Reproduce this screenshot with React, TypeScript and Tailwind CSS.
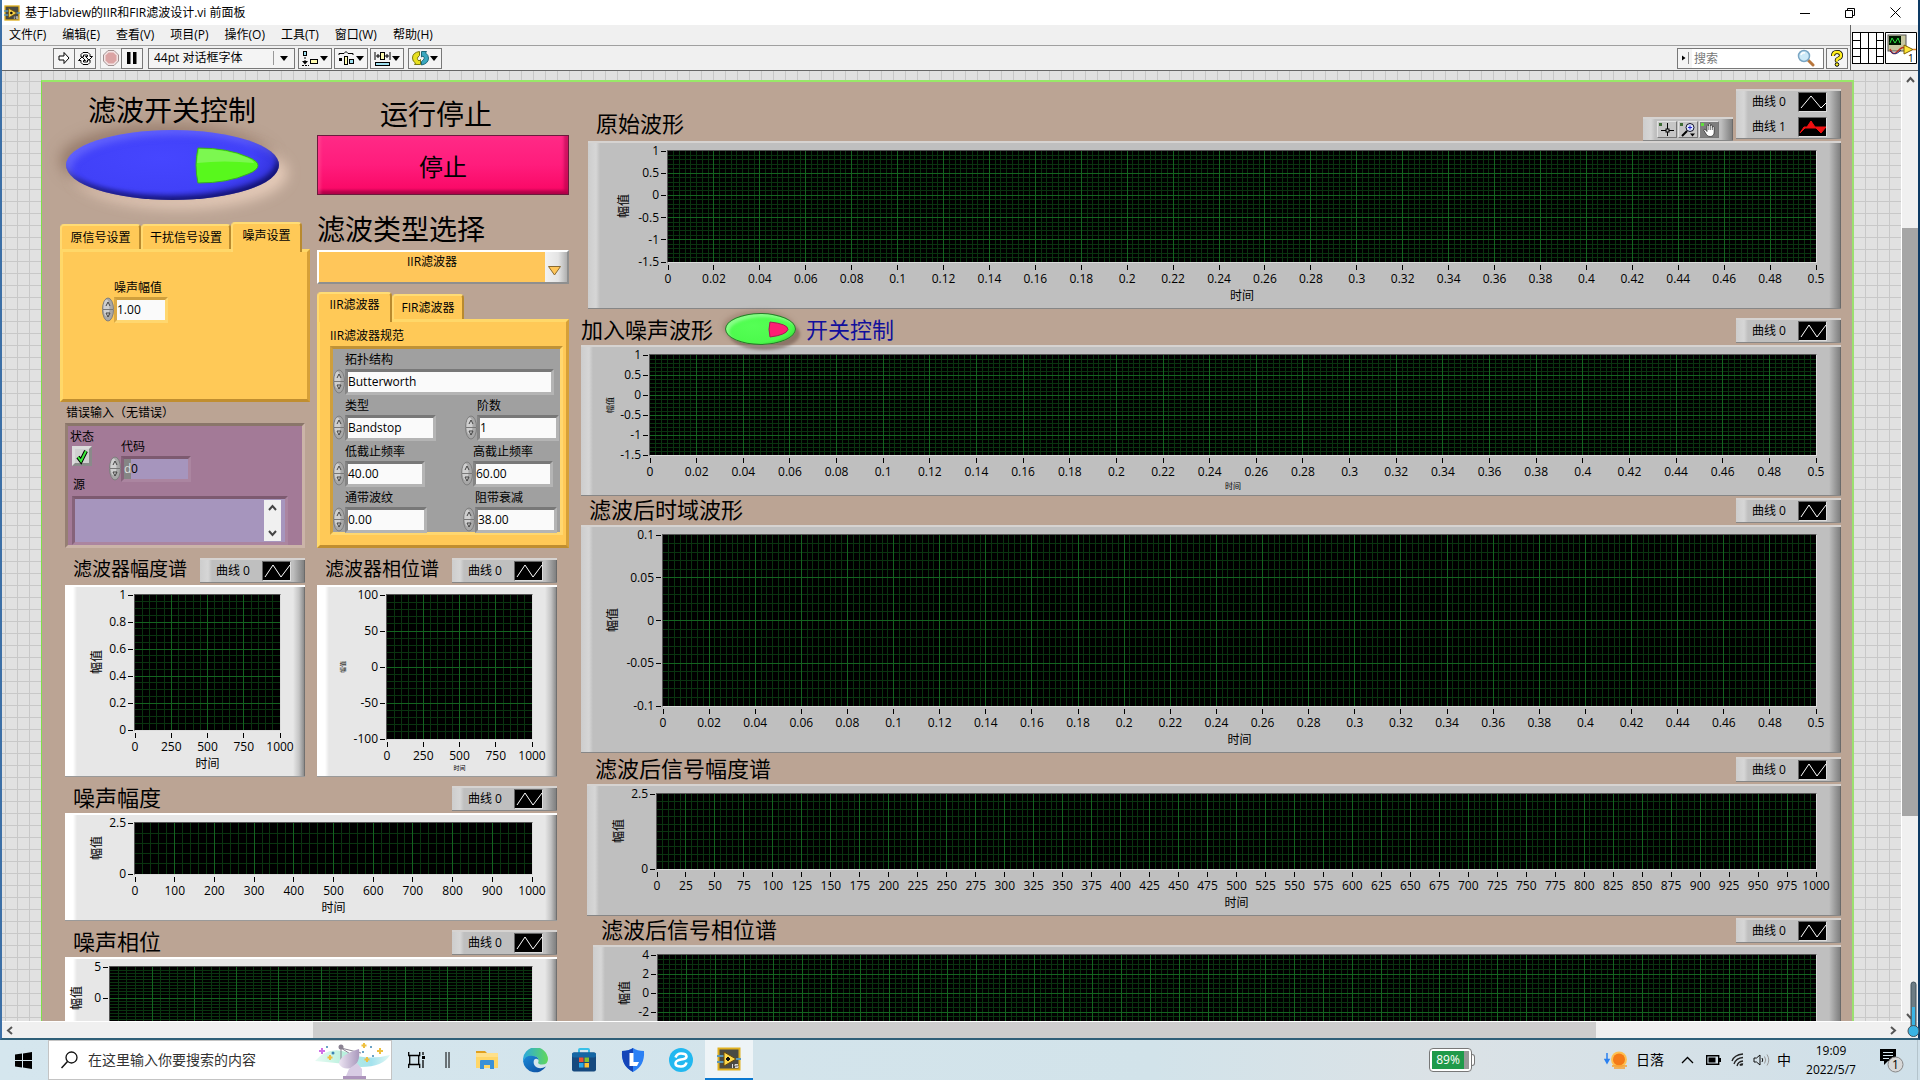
import React from "react";

const FONT = "font-['Open_Sans','Noto_Sans_CJK_SC',sans-serif]";

/* ---------- plots ---------- */

type PlotProps = {
  xs: string[];
  ys: string[];
  minorX: number;
  minorY: number;
  heightClass: string;
  bare?: boolean;
};

function Plot({ xs, ys, minorX, minorY, heightClass, bare }: PlotProps) {
  const nx = (xs.length - 1) * minorX;
  const ny = (ys.length - 1) * minorY;
  const cols = Array.from({ length: nx + 1 }, (_, i) => i);
  const rows = Array.from({ length: ny + 1 }, (_, i) => i);
  const px = (i: number, n: number) => `${(i / n) * 100}%`;
  return (
    <div className={`border border-t-[#555] border-l-[#555] border-r-[#dcdcdc] border-b-[#dcdcdc] bg-black ${heightClass}`}>
      <svg className="block h-full w-full overflow-visible text-xs" role="img" aria-label="plot">
        <g stroke="#0a3410" shapeRendering="crispEdges">
          {cols.filter((i) => i % minorX !== 0).map((i) => (
            <line key={i} x1={px(i, nx)} x2={px(i, nx)} y1="0" y2="100%" />
          ))}
          {rows.filter((i) => i % minorY !== 0).map((i) => (
            <line key={i} y1={px(i, ny)} y2={px(i, ny)} x1="0" x2="100%" />
          ))}
        </g>
        <g stroke="#146420" shapeRendering="crispEdges">
          {xs.slice(1, -1).map((t, i) => (
            <line key={t} x1={px(i + 1, xs.length - 1)} x2={px(i + 1, xs.length - 1)} y1="0" y2="100%" />
          ))}
          {ys.slice(1, -1).map((t, i) => (
            <line key={t} y1={px(i + 1, ys.length - 1)} y2={px(i + 1, ys.length - 1)} x1="0" x2="100%" />
          ))}
        </g>
        {!bare && xs.map((t, i) => (
          <svg key={t} x={px(i, xs.length - 1)} y="100%" className="overflow-visible">
            <path d="M0 3v5" stroke="#000" shapeRendering="crispEdges" />
            <text y="21" textAnchor="middle">{t}</text>
          </svg>
        ))}
        {ys.map((t, i) => t && (
          <svg key={t} y={px(i, ys.length - 1)} x="0" className="overflow-visible">
            <path d="M-7 0h5" stroke="#000" shapeRendering="crispEdges" />
            <text x="-9" y="4" textAnchor="end">{t}</text>
          </svg>
        ))}
      </svg>
    </div>
  );
}

const GRAY_BEVEL =
  "border-t-2 border-t-[#d6d3d1] border-b border-b-[#868686] bg-[linear-gradient(90deg,#cdcdcd_0,#d6d6d6_8px,#bfbfbf_12px,#bfbfbf_calc(100%-12px),#9c9c9c_calc(100%-6px),#808080_calc(100%-1px),#555_100%)]";
const WHITE_BEVEL =
  "border-t-2 border-t-white border-b border-b-[#9a9a9a] bg-[linear-gradient(90deg,#fff_0,#fff_8px,#e7e7e7_12px,#e7e7e7_calc(100%-12px),#c4c4c4_calc(100%-6px),#8c8c8c_calc(100%-1px),#555_100%)]";

type GraphProps = PlotProps & {
  light?: boolean;
  axisClass: string;
  yTitleClass?: string;
  small?: "md" | "xs";
};

function Graph({ light, axisClass, yTitleClass = "text-xs", small, ...plot }: GraphProps) {
  const footer = small === "md" ? "mt-6 h-3 leading-3 text-[8px]" : small === "xs" ? "mt-6 h-[9px] leading-[9px] text-[6px]" : "mt-6 h-[18px] leading-[18px] text-xs";
  return (
    <div className={`flex pt-[7px] pb-[3px] pr-6 ${light ? WHITE_BEVEL : GRAY_BEVEL}`}>
      <div className={`shrink-0 flex items-start justify-start ${axisClass}`}>
        <div className={`flex items-center justify-center ${plot.heightClass}`}>
          <span className={`rotate-180 leading-4 [writing-mode:vertical-rl] [text-orientation:sideways] ${yTitleClass}`}>幅值</span>
        </div>
      </div>
      <div className="min-w-0 flex-1">
        <Plot {...plot} />
        <div className={`text-center ${footer}`}>{!plot.bare && "时间"}</div>
      </div>
    </div>
  );
}

function Swatch({ kind }: { kind: "line" | "wide" | "fill" }) {
  return (
    <svg width="29" height="20" className="border border-[#666] border-b-[#ddd] border-r-[#ddd] bg-black">
      {kind === "line" && <path d="M2 15L10 3L18 15L27 3" fill="none" stroke="#fff" />}
      {kind === "wide" && <path d="M2 15L12 3L22 15L27 10" fill="none" stroke="#fff" />}
      {kind === "fill" && <path d="M1 15L5 9L8 9L12 3L16 9L27 9L22 15L17 10L6 10Z" fill="#f01010" stroke="#f01010" />}
    </svg>
  );
}

function Legend({ double }: { double?: boolean }) {
  const row = (name: string, kind: "line" | "wide" | "fill") => (
    <div className="flex h-[21px] items-center justify-between">
      <span className="leading-4">{name}</span>
      <Swatch kind={kind} />
    </div>
  );
  return (
    <div className={`mb-0.5 flex w-[105px] shrink-0 flex-col gap-1 pb-px pl-4 pr-3.5 text-xs ${GRAY_BEVEL}`}>
      {row("曲线 0", double ? "wide" : "line")}
      {double && row("曲线 1", "fill")}
    </div>
  );
}

function Palette() {
  const cell = "flex h-[17px] w-5 items-center justify-center border border-[#e2e2e2] border-b-[#777] border-r-[#777]";
  return (
    <div className={`mr-[3px] flex h-6 shrink-0 items-center gap-px pl-3.5 pr-3 w-[90px] ${GRAY_BEVEL}`}>
      <button aria-label="光标" className={`${cell} bg-[#c6c6c6]`}>
        <svg width="18" height="15"><rect x="1" y="1" width="3" height="3" fill="#3d6b35" /><path d="M9.500 1v13M3 8.500h13" stroke="#000" /><rect x="8" y="7" width="3" height="3" fill="#c6c6c6" stroke="#000" /></svg>
      </button>
      <button aria-label="缩放" className={`${cell} bg-[#c6c6c6]`}>
        <svg width="18" height="15"><rect x="1" y="1" width="3" height="3" fill="#3d6b35" /><circle cx="11" cy="5.500" r="4" fill="#dde6ff" stroke="#112" /><path d="M9 5.500h4M11 3.500v4" stroke="#22c" /><path d="M8 9L3 14" stroke="#000" strokeWidth="2" /><path d="M11 11.500h5l-2.500 3z" /></svg>
      </button>
      <button aria-label="平移" className={`${cell} bg-[#7e7e7e]`}>
        <svg width="18" height="15"><rect x="1" y="1" width="3" height="3" fill="#5fe03c" /><path d="M3.500 8c1-1.500 2.500 0 3.500 1.500V4c0-1.300 1.800-1.300 1.800 0V2.500c0-1.300 1.800-1.300 1.800 0V4c0-1.300 1.800-1.300 1.800 0v1.500c0-1.300 1.800-1.300 1.800 0V10c0 3-1.500 4.500-4 4.500s-3.700-1.500-5-4z" fill="#fff" stroke="#222" strokeWidth=".7" /><path d="M8.800 4v4M10.600 4v4M12.400 5.500V8" stroke="#222" strokeWidth=".6" /></svg>
      </button>
    </div>
  );
}

function Header({ title, size = "text-[22px]", h, double, children }: { title: string; size?: string; h: string; double?: boolean; children?: React.ReactNode }) {
  return (
    <div className={`flex items-end ${h}`}>
      <h2 className={`shrink-0 whitespace-nowrap leading-7 ${double ? "mb-1" : "mb-0.5"} ${size}`}>{title}</h2>
      {children}
      <div className="ml-auto flex items-end">
        {double && <Palette />}
        <Legend double={double} />
      </div>
    </div>
  );
}

/* ---------- controls ---------- */

function Spinner() {
  return (
    <svg width="12" height="26" viewBox="0 0 12 26" className="shrink-0">
      <ellipse cx="6" cy="12.500" rx="5.500" ry="11.500" fill="#a8a8a8" stroke="#7e7e7e" />
      <ellipse cx="4.500" cy="11" rx="3" ry="8.500" fill="#cfcfcf" />
      <path d="M1 12.500h10" stroke="#777" />
      <path d="M4 9L6 5L8 9M4 16h4L6 20z" fill="none" stroke="#444" />
    </svg>
  );
}

type FieldProps = { id: string; label: string; value: string; width: string; tone?: "gray" | "gold" | "purple" };

function Field({ id, label, value, width, tone = "gray" }: FieldProps) {
  const frame =
    tone === "gold"
      ? "border-t-[#cf9f3c] border-l-[#dba944] border-r-[#ffd76f] border-b-[#ffd76f] bg-[#fafafa]"
      : tone === "purple"
        ? "border-t-[#7d5a70] border-l-[#86637a] border-r-[#ab85a0] border-b-[#ab85a0] bg-[#a695bd]"
        : "border-t-[#787878] border-l-[#858585] border-r-[#b4b4b4] border-b-[#b4b4b4] bg-[#fafafa]";
  return (
    <div className="shrink-0">
      <label htmlFor={id} className="block h-[18px] pl-3 leading-[18px]">{label}</label>
      <div className="flex">
        <Spinner />
        <div className={`flex h-[26px] border-[3px] ${frame} ${width}`}>
          {tone === "purple" && <span className="w-[7px] bg-[#858585] leading-5 text-[#ddd]">d</span>}
          <input id={id} defaultValue={value} className="h-5 w-full min-w-0 bg-transparent leading-5 outline-none" />
        </div>
      </div>
    </div>
  );
}

const TAB = "rounded-t border-t-2 border-l-2 border-r-2 border-t-[#ffdc74] border-l-[#ffd971] border-r-[#b98a2e] bg-[#ffc957] whitespace-nowrap text-center";
const TAB_BODY = "border-t-[3px] border-l-[3px] border-r-[3px] border-b-[3px] border-t-[#ffd869] border-l-[#ffd869] border-r-[#d6a038] border-b-[#c08e30] bg-[#ffc957]";

function LeftColumn() {
  return (
    <div className="w-[509px] shrink-0">
      <div className="flex justify-between">
        <div className="w-[250px]">
          <h2 className="mt-2 whitespace-nowrap pl-7 text-[28px] leading-10">滤波开关控制</h2>
          <button
            aria-label="滤波开关控制"
            className="ml-1.5 flex h-[70px] w-[213px] items-center justify-end rounded-[50%] bg-[radial-gradient(ellipse_at_45%_40%,#4646ff_0%,#4141f8_55%,#2a2ac8_80%,#101070_100%)] pr-5 shadow-[inset_5px_5px_7px_#8080ff80,inset_-3px_-4px_5px_#00003090,-6px_-5px_14px_#7a5c4c90,8px_8px_14px_#ffe4d0b0]"
          >
            <svg width="65" height="37" viewBox="0 0 65 37">
              <path d="M4 1Q34 1 54 10Q64 14 64 18.500Q64 23 54 27Q34 36 4 36Q0 18 4 1Z" fill="#58f81c" stroke="#3aae20" />
              <path d="M5 2Q34 2 54 11Q60 14 60 16Q30 13 3 16Z" fill="#7cf850" />
            </svg>
          </button>
          <div className="mt-[22px] flex h-[27px] items-end" role="tablist">
            <button role="tab" className={`h-[25px] w-[81px] leading-[22px] ${TAB}`}>原信号设置</button>
            <button role="tab" className={`h-[25px] w-[90px] leading-[22px] ${TAB}`}>干扰信号设置</button>
            <button role="tab" aria-selected="true" className={`z-10 -mb-[3px] h-[30px] w-[71px] pb-1 leading-[22px] ${TAB}`}>噪声设置</button>
          </div>
          <div className={`h-[153px] pl-[39px] pt-[27px] ${TAB_BODY}`}>
            <Field id="noise" label="噪声幅值" value="1.00" width="w-[54px]" tone="gold" />
          </div>
          <div className="h-[21px] pl-1.5 leading-[21px]">错误输入（无错误）</div>
          <div className="ml-[5px] h-[125px] w-60 border-[3px] border-b-[#cbb4a8] border-l-[#957f73] border-r-[#cbb4a8] border-t-[#8a766a] bg-[#a37a97] pl-0.5">
            <div className="flex h-[50px] items-start">
              <div className="w-[39px] pt-0.5">
                <label htmlFor="status" className="block h-[18px] leading-[18px]">状态</label>
                <div className="relative ml-0.5 h-5 w-5">
                  <input id="status" type="checkbox" defaultChecked className="block h-5 w-5 appearance-none border-[3px] border-b-[#8a8a8a] border-l-[#dcdcdc] border-r-[#8a8a8a] border-t-[#dcdcdc] bg-[#d0d0d0]" />
                  <svg className="pointer-events-none absolute inset-0" width="20" height="20"><path d="M6 11l3 4l5-10" fill="none" stroke="#000" strokeWidth="4" /><path d="M6 11l3 4l5-10" fill="none" stroke="#3bea3b" strokeWidth="2" /></svg>
                </div>
              </div>
              <div className="pt-3">
                <Field id="code" label="代码" value="0" width="w-[70px]" tone="purple" />
              </div>
            </div>
            <label htmlFor="source" className="block h-5 pl-[3px] leading-[18px]">源</label>
            <div className="ml-0.5 flex h-[49px] w-[216px] border-[3px] border-b-[#ab85a0] border-l-[#86637a] border-r-[#ab85a0] border-t-[#7d5a70] bg-[#a695bd] pr-1">
              <textarea id="source" className="min-w-0 flex-1 resize-none bg-transparent outline-none" />
              <div className="my-px flex w-[17px] flex-col items-center justify-between bg-[#f0f0f0] py-1">
                <svg width="9" height="7"><path d="M1 6L4.500 2L8 6" fill="none" stroke="#444" strokeWidth="2" /></svg>
                <svg width="9" height="7"><path d="M1 1L4.500 5L8 1" fill="none" stroke="#444" strokeWidth="2" /></svg>
              </div>
            </div>
          </div>
        </div>

        <div className="w-[252px]">
          <h2 className="mt-3 whitespace-nowrap pl-[63px] text-[28px] leading-10">运行停止</h2>
          <button className="mt-px block h-[60px] w-full border border-[#6b1a3c] bg-[linear-gradient(#ff2a86_0,#ff1c7c_50%,#fa0a68_90%,#b8004c_100%)] pt-1 text-2xl shadow-[inset_5px_0_3px_-2px_#ff5a9a60,inset_-4px_-3px_3px_#a0004080]">停止</button>
          <h2 className="mt-3.5 whitespace-nowrap text-[28px] leading-10">滤波类型选择</h2>
          <div className="mt-px flex h-[34px] border-2 border-b-[#8f8f8f] border-l-white border-r-[#8f8f8f] border-t-white bg-[#ffc65a]">
            <select aria-label="滤波类型选择" className="min-w-0 flex-1 appearance-none pb-2.5 text-center outline-none [text-align-last:center]">
              <option>IIR滤波器</option>
            </select>
            <div className="flex w-[22px] items-center justify-center bg-[linear-gradient(90deg,#f2f2f2,#e4e4e4_60%,#b0b0b0)] pr-1 pt-2">
              <svg width="13" height="10"><path d="M.5 .5h12L6.500 9z" fill="#ffc65a" stroke="#8a6a30" /></svg>
            </div>
          </div>
          <div className="mt-2 flex h-[27px] items-end" role="tablist">
            <button role="tab" aria-selected="true" className={`z-10 -mb-[3px] h-[30px] w-[75px] pb-1.5 leading-[22px] ${TAB}`}>IIR滤波器</button>
            <button role="tab" className={`h-[25px] w-[72px] leading-[22px] ${TAB}`}>FIR滤波器</button>
          </div>
          <div className={`h-[229px] pl-2.5 pr-[3px] pt-1 ${TAB_BODY}`}>
            <div className="h-5 leading-5">IIR滤波器规范</div>
            <div className="h-[189px] border-[3px] border-b-[#ffd76f] border-l-[#cf9f3c] border-r-[#ffd76f] border-t-[#c09236] bg-[#a0a0a0] pt-0.5">
              <Field id="topology" label="拓扑结构" value="Butterworth" width="w-[209px]" />
              <div className="mt-0.5 flex gap-[29px]">
                <Field id="kind" label="类型" value="Bandstop" width="w-[91px]" />
                <Field id="order" label="阶数" value="1" width="w-[82px]" />
              </div>
              <div className="mt-0.5 flex gap-9">
                <Field id="low" label="低截止频率" value="40.00" width="w-20" />
                <Field id="high" label="高截止频率" value="60.00" width="w-20" />
              </div>
              <div className="mt-0.5 flex gap-9">
                <Field id="ripple" label="通带波纹" value="0.00" width="w-[82px]" />
                <Field id="atten" label="阻带衰减" value="38.00" width="w-[82px]" />
              </div>
            </div>
          </div>
        </div>
      </div>

      <div className="ml-[5px] mr-3">
        <div className="flex gap-3">
          <section className="w-60">
            <div className="pl-2"><Header title="滤波器幅度谱" size="text-[19px]" h="h-[37px]" /></div>
            <Graph light axisClass="w-[69px] pl-6" heightClass="h-[137px]" xs={["0", "250", "500", "750", "1000"]} ys={["1", "0.8", "0.6", "0.4", "0.2", "0"]} minorX={5} minorY={4} />
          </section>
          <section className="w-60">
            <div className="pl-2"><Header title="滤波器相位谱" size="text-[19px]" h="h-[37px]" /></div>
            <Graph light small="xs" yTitleClass="text-[6px]" axisClass="w-[69px] pl-[18px]" heightClass="h-[146px]" xs={["0", "250", "500", "750", "1000"]} ys={["100", "50", "0", "-50", "-100"]} minorX={5} minorY={5} />
          </section>
        </div>
        <section>
          <div className="pl-2"><Header title="噪声幅度" h="h-9" /></div>
          <Graph light axisClass="w-[69px] pl-6" heightClass="h-[53px]" xs={["0", "100", "200", "300", "400", "500", "600", "700", "800", "900", "1000"]} ys={["2.5", "0"]} minorX={5} minorY={5} />
        </section>
        <section>
          <div className="pl-2"><Header title="噪声相位" h="h-9" /></div>
          <Graph light bare axisClass="w-11 pl-1" heightClass="h-16" xs={["0", "100", "200", "300", "400", "500", "600", "700", "800", "900", "1000"]} ys={["5", "0", ""]} minorX={5} minorY={10} />
        </section>
      </div>
    </div>
  );
}

const TIME = Array.from({ length: 26 }, (_, i) => String(Math.round(i * 2) / 100));
const FREQ = Array.from({ length: 41 }, (_, i) => String(i * 25));
const AMP = ["1", "0.5", "0", "-0.5", "-1", "-1.5"];

function RightColumn() {
  return (
    <div className="min-w-0 flex-1">
      <section className="ml-[7px]">
        <div className="pl-2"><Header title="原始波形" h="h-[59px]" double /></div>
        <Graph axisClass="w-[79px] pl-7" heightClass="h-[113px]" xs={TIME} ys={AMP} minorX={8} minorY={5} />
      </section>
      <section>
        <Header title="加入噪声波形" h="h-9">
          <button
            aria-label="开关控制"
            className="ml-3 mr-2.5 flex h-8 w-[71px] shrink-0 items-center justify-end rounded-[50%] border border-[#2b7a2b] bg-[radial-gradient(ellipse_at_40%_40%,#55ff55_0%,#4cfa4c_65%,#20b020_100%)] pr-1.5 shadow-[-2px_-2px_5px_#8a6c5c80,4px_5px_3px_#6a544890,inset_3px_3px_3px_#c0ffc080]"
          >
            <svg width="21" height="17"><path d="M2 1Q20 3 20 8.500Q18 14 2 16Q0 8 2 1Z" fill="#ff1c74" stroke="#a02050" /></svg>
          </button>
          <span className="mb-0.5 whitespace-nowrap text-[22px] leading-7 text-[#10109c]">开关控制</span>
        </Header>
        <Graph small="md" yTitleClass="text-[8px]" axisClass="w-[68px] pl-[21px]" heightClass="h-[102px]" xs={TIME} ys={AMP} minorX={8} minorY={5} />
      </section>
      <section>
        <div className="pl-2"><Header title="滤波后时域波形" h="h-[29px]" /></div>
        <Graph axisClass="w-[81px] pl-6" heightClass="h-[173px]" xs={TIME} ys={["0.1", "0.05", "0", "-0.05", "-0.1"]} minorX={8} minorY={5} />
      </section>
      <section className="ml-1.5">
        <div className="pl-2"><Header title="滤波后信号幅度谱" h="h-[31px]" /></div>
        <Graph axisClass="w-[69px] pl-6" heightClass="h-[77px]" xs={FREQ} ys={["2.5", "0"]} minorX={5} minorY={10} />
      </section>
      <section className="ml-3">
        <div className="pl-2"><Header title="滤波后信号相位谱" h="h-[29px]" /></div>
        <Graph bare axisClass="w-16 pl-6" heightClass="h-[78px]" xs={FREQ} ys={["4", "2", "0", "-2", ""]} minorX={5} minorY={4} />
      </section>
    </div>
  );
}

/* ---------- window chrome ---------- */

function LabviewIcon({ size }: { size: number }) {
  return (
    <svg width={size} height={size} viewBox="0 0 24 24" className="shrink-0">
      <rect x="1.500" y="1.500" width="21" height="21" fill="#4a4a44" stroke="#e0b020" strokeWidth="2" />
      <path d="M0 9h7M0 15h7M17 12h7" stroke="#5a96b8" strokeWidth="2" />
      <path d="M7 5L19 12L7 19Z" fill="#ffd84a" stroke="#6a4a08" />
      <path d="M9 12h4M11 10v4" stroke="#111" strokeWidth="2" />
      <path d="M15.500 17v4M21 17.500h-3v1.500h3v1.500h-3" stroke="#ddd" fill="none" />
    </svg>
  );
}

const Caret = () => (
  <svg width="8" height="5"><path d="M0 0h8L4 5z" /></svg>
);

const TB = "flex h-[21px] items-center justify-center border border-[#787878] bg-[#f4f4f4]";

function Toolbar() {
  return (
    <div className="flex h-[25px] items-center border-t border-[#a0a0a0] bg-[#f0f0f0] pl-[51px] pr-0.5">
      <button aria-label="运行" className={`w-[22px] ${TB}`}>
        <svg width="14" height="14"><path d="M2 5h5V1.500L12 7L7 12.500V9H2z" fill="#fff" stroke="#000" /></svg>
      </button>
      <button aria-label="连续运行" className={`-ml-px w-[22px] ${TB}`}>
        <svg width="17" height="15" fill="none" stroke="#000"><path d="M4 6V3.500L6 1.500h5l2 2v2h2.500L12 9L8.500 5.500h2V4h-4v2z" fill="#fff" /><path d="M13 9v2.500L11 13.500H6l-2-2V9.500H1.500L5 6L8.500 9.500h-2V11h4V9z" fill="#fff" /></svg>
      </button>
      <button aria-label="中止" className={`ml-1 w-[22px] ${TB} border-[#c0c0c0]`}>
        <svg width="16" height="16"><path d="M5 .5h6L15.500 5v6L11 15.500H5L.5 11V5z" fill="#f4e4e4" stroke="#a09090" /><path d="M5.500 2.500h5l3 3v5l-3 3h-5l-3-3v-5z" fill="#dba4a4" /></svg>
      </button>
      <button aria-label="暂停" className={`-ml-px w-[22px] ${TB}`}>
        <svg width="10" height="12"><path d="M0 0h3.500v12H0zM6 0h3.500v12H6z" /></svg>
      </button>
      <div className={`relative ml-[5px] w-[147px] ${TB}`}>
        <select aria-label="字体" className="h-full w-full appearance-none pl-[5px] outline-none"><option>44pt 对话框字体</option></select>
        <span className="pointer-events-none absolute right-1.5 flex items-center gap-1.5">
          <i className="h-3.5 w-px bg-[#999]" />
          <Caret />
        </span>
      </div>
      <button aria-label="对齐对象" className={`ml-[3px] w-[34px] gap-px ${TB}`}>
        <svg width="17" height="15"><rect x="1.500" y=".5" width="3" height="4" fill="#9fe0f0" stroke="#000" /><path d="M3 6v5" stroke="#000" strokeDasharray="2 1" /><path d="M0 10h6L3 13.500z" /><path d="M0 14.500h7" stroke="#000" strokeDasharray="2 1" /><rect x="8.500" y="8.500" width="7" height="4" fill="#fffbb0" stroke="#000" /></svg>
        <Caret />
      </button>
      <button aria-label="分布对象" className={`ml-0.5 w-[34px] gap-px ${TB}`}>
        <svg width="17" height="15"><path d="M1 4V2.500h5L8 .5l2 2h5V4" fill="none" stroke="#000" /><rect x="1" y="7" width="3" height="3" /><rect x="6.500" y="5.500" width="3" height="8" fill="#fffbb0" stroke="#000" /><rect x="11.500" y="8.500" width="4" height="4" fill="#9fe0f0" stroke="#000" /></svg>
        <Caret />
      </button>
      <button aria-label="调整大小" className={`ml-0.5 w-[34px] gap-px ${TB}`}>
        <svg width="17" height="15"><path d="M1 1v8M16 1v8M2 5h4M11 5h4M4 3v4M13 3v4" stroke="#000" /><rect x="6.500" y="1.500" width="4" height="7" fill="#fffbb0" stroke="#000" /><rect x="1.500" y="11.500" width="14" height="3" fill="#9fe0f0" stroke="#000" /></svg>
        <Caret />
      </button>
      <button aria-label="重新排序" className={`ml-1 w-[34px] gap-px ${TB}`}>
        <svg width="17" height="15"><path d="M7.500 .5Q.5 1.500 .5 7q0 3.500 3 5l-1 1.500h6V8.500L7 10Q3.500 7.500 7.500 4.500Z" fill="#e8e020" stroke="#7a7810" /><path d="M9.500 .5v5.500l1.500-1q3 2.500-1.500 5.500V14Q16.500 12.500 16.500 7q0-3-3-5l1-1.500z" fill="#3aa8c0" stroke="#1c6878" /></svg>
        <Caret />
      </button>
      <div className={`ml-auto w-[147px] ${TB} bg-white`}>
        <span className="flex h-full w-3.5 items-center justify-center bg-[#f4f4f4]"><svg width="9" height="12"><path d="M1 3.500v5l3.500-2.500z" /><path d="M7.500 0v12" stroke="#888" /></svg></span>
        <input aria-label="搜索" placeholder="搜索" className="h-full min-w-0 flex-1 pl-0.5 outline-none placeholder:text-[#777]" />
        <svg width="18" height="18" className="mr-2"><path d="M11 11l5 5" stroke="#b8763c" strokeWidth="3" strokeLinecap="round" /><circle cx="7" cy="7" r="5.500" fill="#cdeaf8" stroke="#7aa6c4" strokeWidth="1.500" /><path d="M4 6q1-3 4-2" stroke="#fff" fill="none" strokeWidth="1.500" /></svg>
      </div>
      <button aria-label="帮助" className={`ml-0.5 w-[22px] ${TB}`}>
        <svg width="14" height="17" fill="none"><path d="M3 6q0-4 4-4t4 3.500q0 2-2.500 3T7 11.500" stroke="#000" strokeWidth="4" /><path d="M3 6q0-4 4-4t4 3.500q0 2-2.500 3T7 11.500" stroke="#ffee20" strokeWidth="2.500" /><circle cx="7" cy="14.500" r="1.800" fill="#ffee20" stroke="#000" /></svg>
      </button>
    </div>
  );
}

const MENUS = ["文件(F)", "编辑(E)", "查看(V)", "项目(P)", "操作(O)", "工具(T)", "窗口(W)", "帮助(H)"];

function Taskbar() {
  return (
    <footer className="flex h-10 shrink-0 items-center bg-[linear-gradient(90deg,#d5e6ee,#d2e3ea_60%,#dbe2e6_75%,#cfe0e9)]">
      <button aria-label="开始" className="flex h-full w-12 items-center justify-center pr-0.5">
        <svg width="17" height="17"><path d="M0 2.500L7 1.500V8H0zM8 1.400L17 0V8H8zM0 9h7v6.500L0 14.500zM8 9h9v8L8 15.600z" /></svg>
      </button>
      <div className="relative flex h-full w-[344px] items-center border border-[#c4c4c4] bg-white pl-3">
        <svg width="17" height="18"><circle cx="10.500" cy="6.500" r="5.500" fill="none" stroke="#111" strokeWidth="1.300" /><path d="M6.500 10.500L.5 17" stroke="#111" strokeWidth="1.500" /></svg>
        <input aria-label="搜索" placeholder="在这里输入你要搜索的内容" className="min-w-0 flex-1 pl-2.5 text-sm outline-none placeholder:text-[#333]" />
        <svg width="76" height="38" viewBox="0 0 76 38">
          <defs>
            <linearGradient id="aurora" x1="0" x2="1"><stop offset="0" stopColor="#e8fbf4" /><stop offset=".4" stopColor="#b8f0dc" /><stop offset=".75" stopColor="#a4e2ee" /><stop offset="1" stopColor="#e0f8f4" /></linearGradient>
            <linearGradient id="dish" x1="0" x2="1"><stop offset="0" stopColor="#ece4f2" /><stop offset="1" stopColor="#a998bc" /></linearGradient>
          </defs>
          <path d="M0 20Q14 4 34 12Q52 20 75 14Q68 26 46 26Q28 22 0 20Z" fill="url(#aurora)" />
          <path d="M26 7L46 12M26 7L40 16M26 7V19" stroke="#8a8292" />
          <path d="M24 23Q24 14 44 8Q46 22 36 27Q28 29 24 23Z" fill="url(#dish)" />
          <circle cx="26" cy="6" r="2.500" fill="#8a8292" />
          <path d="M34 28l8-6l5 6v7H31z" fill="#d8cce4" /><path d="M28 35h23v3H28z" fill="#ad94bc" />
          <path d="M7 7v6M4 10h6" stroke="#d070e8" strokeWidth="2" />
          <path d="M49 2v5M46.500 4.500h5M65 7v6M62 10h6M52 16v5M49.500 18.500h5M15 14v5M12.500 16.500h5" stroke="#eec040" strokeWidth="2" />
          <g fill="#3a84b4"><circle cx="18" cy="12" r="1.500" /><circle cx="48" cy="11" r="1" /><circle cx="58" cy="15" r="1" /><circle cx="12" cy="6" r="1" /><circle cx="56" cy="6" r="1" /></g>
        </svg>
      </div>
      <svg className="ml-4" width="17" height="16" fill="none" stroke="#000" strokeWidth="1.300"><path d="M.7 0v3.500h11V0M.7 16v-3.500h11V16M1.700 3.500v9M10.700 3.500v9M15 0v3M15 8v8" /><path d="M14 4h3v3h-3z" fill="#000" stroke="none" /></svg>
      <svg className="ml-5" width="5" height="16"><path d="M1 0v16M4 0v16" stroke="#000" /></svg>
      <svg className="ml-[25px]" width="23" height="20"><path d="M1 1h9l2 2H1z" fill="#e0a020" /><path d="M1 3h22v15H1z" fill="#ffd668" /><path d="M1 3h22v4H1z" fill="#ffe08a" /><path d="M5 19v-8q0-1 1-1h12q1 0 1 1v8h-4v-4H9v4z" fill="#3a90d8" /></svg>
      <svg className="ml-[25px]" width="25" height="25" viewBox="0 0 25 25">
        <defs>
          <linearGradient id="edgeTop" x1="0" x2="1"><stop offset="0" stopColor="#2aa8e0" /><stop offset="1" stopColor="#62d85a" /></linearGradient>
          <linearGradient id="edgeBlue" x1="0" y1="0" x2="1" y2="1"><stop offset="0" stopColor="#1a8ad8" /><stop offset="1" stopColor="#0c4a9c" /></linearGradient>
        </defs>
        <path d="M0 12.500A12.500 12.500 0 0 1 25 11q0 5.500-6 5.500q-5 0-3.500-3Q16 8 10 8Q3 8 0 13z" fill="url(#edgeTop)" />
        <path d="M0 13Q3 7 10 8Q15 8 15.500 12Q13 9.500 11 12Q9.500 17 14 19.500Q18 21.500 23 18.500A12.500 12.500 0 0 1 0 13Z" fill="url(#edgeBlue)" />
      </svg>
      <svg className="ml-6" width="24" height="24"><path d="M7 5V2q0-1 1-1h8q1 0 1 1v3" fill="none" stroke="#38c0e8" strokeWidth="2" /><rect y="4.500" width="24" height="19" rx="2" fill="#16497e" /><rect y="4.500" width="24" height="5" rx="2" fill="#1466a4" /><path d="M7 9.500h4.500V14H7z" fill="#f05030" /><path d="M12.500 9.500H17V14h-4.500z" fill="#80c030" /><path d="M7 15h4.500v4.500H7z" fill="#28a8e8" /><path d="M12.500 15H17v4.500h-4.500z" fill="#ffc030" /></svg>
      <svg className="ml-[25px]" width="24" height="24"><path d="M12 0Q16 3 23 3Q24 18 12 24Q0 18 1 3Q8 3 12 0Z" fill="#2b80f4" /><path d="M12 0Q8 3 1 3Q0 18 12 24Z" fill="#1444b8" /><path d="M8.500 5h4v9H18l-2 4H8.500z" fill="#fff" /></svg>
      <svg className="ml-6" width="24" height="24"><circle cx="12" cy="12" r="12" fill="#22b8f0" /><path d="M6.500 9.500Q8 5.500 12 5.500Q17.500 5.500 17.500 8.500Q17.500 11 12 11.500Q6.500 12.500 6.500 15.500Q6.500 18.500 12 18.500Q16.500 18.500 17.500 14.500" fill="none" stroke="#fff" strokeWidth="2.600" /></svg>
      <div className="ml-3 flex h-full w-12 items-center justify-center border-b-2 border-[#0b78d0] bg-[#eef4f7]"><LabviewIcon size={24} /></div>

      <div className="ml-auto flex items-center">
        <div className="flex items-center">
          <div className="flex h-6 w-[43px] rounded-sm border border-[#777] bg-white p-[2px]"><div className="w-8 bg-[#1f9a4a] text-center leading-[18px] text-white">89%</div><div className="flex-1 bg-[#999]" /></div>
          <div className="h-3 w-[3px] rounded-r border border-l-0 border-[#777] bg-white" />
        </div>
        <svg className="ml-[129px]" width="24" height="18"><path d="M3 2v9M1 8.500L3 12l2-3.500z" stroke="#2a80f0" fill="#2a80f0" strokeWidth="1.500" /><circle cx="15" cy="8.500" r="8" fill="#ffc050" /><circle cx="15" cy="8.500" r="6" fill="#f47a18" /><path d="M8 15h15M10 17h11" stroke="#f8a030" strokeWidth="1.500" /></svg>
        <span className="ml-2 text-sm">日落</span>
        <svg className="ml-[17px]" width="13" height="8"><path d="M1 7L6.500 1.500L12 7" fill="none" stroke="#000" strokeWidth="1.300" /></svg>
        <svg className="ml-3" width="15" height="10"><path d="M.7 .7h12v8.600H.7z" fill="none" stroke="#000" strokeWidth="1.400" /><path d="M2.500 2.500h7v5h-7zM13 3h2v4h-2z" /></svg>
        <svg className="ml-2.5" width="14" height="14" fill="none" stroke="#222"><path d="M1 8Q3 2 12 1M3 11Q5 5 12 4.500M6 13q1-4.500 6-5" strokeWidth="1.300" /><path d="M9 12.500q1-1.500 3-1" strokeWidth="2" /></svg>
        <svg className="ml-2" width="17" height="14" fill="none" stroke="#111"><path d="M1 5v4h2.500L7 12V2L3.500 5z" /><path d="M9 5q1.500 2 0 4" /><path d="M11.500 3.500q2.500 3.500 0 7M14 1.500q3.500 5.500 0 11" stroke="#999" /></svg>
        <span className="ml-[7px] text-sm">中</span>
        <div className="ml-3.5 w-[52px] text-center leading-[19px]"><div>19:09</div><div>2022/5/7</div></div>
        <svg className="ml-[23px] mr-3" width="25" height="25"><path d="M0 1h16v12h-8L4 17v-4H0z" /><path d="M3 4.500h10M3 7.500h10M3 10.500h6" stroke="#d5e6ee" /><circle cx="15.500" cy="16.500" r="7.500" fill="#d8d8d8" stroke="#888" /><text x="12" y="21" fontSize="12">1</text></svg>
        <div className="mr-0.5 h-10 w-px bg-[#b4c4cc]" />
      </div>
    </footer>
  );
}

const Chevron = ({ d }: { d: string }) => (
  <svg width="9" height="9" className="shrink-0"><path d={d} fill="none" stroke="#555" strokeWidth="2" /></svg>
);

export default function App() {
  return (
    <div className={`flex h-screen flex-col overflow-hidden text-xs text-black ${FONT}`}>
      <div className="relative flex min-h-0 flex-1 flex-col border-x-2 border-b-2 border-b-[#2f5f78] border-l-[#3c6fa6] border-r-[#0d3a64]">
        <header className="flex h-[25px] shrink-0 items-center bg-white pl-0.5">
          <LabviewIcon size={16} />
          <h1 className="ml-[5px]">基于labview的IIR和FIR滤波设计.vi 前面板</h1>
          <div className="ml-auto flex items-center gap-[35px] pr-[17px]">
            <button aria-label="最小化"><svg width="10" height="10"><path d="M0 5.500h10" stroke="#000" /></svg></button>
            <button aria-label="还原"><svg width="10" height="10" fill="none" stroke="#000"><path d="M.5 2.500h7v7h-7zM2.500 2.500v-2h7v7h-2" /></svg></button>
            <button aria-label="关闭"><svg width="11" height="11"><path d="M.5 .5l10 10M10.500 .5l-10 10" stroke="#000" /></svg></button>
          </div>
        </header>
        <div className="flex shrink-0 border-b border-[#666] bg-[#f0f0f0]">
          <div className="min-w-0 flex-1">
            <nav className="flex h-5 items-center gap-4 pl-[7px]">
              {MENUS.map((m) => <button key={m} className="leading-5">{m}</button>)}
            </nav>
            <Toolbar />
          </div>
          <div className="flex w-[68px] items-center gap-px border-l border-[#666] pl-px pt-px">
            <svg width="32" height="32" fill="#fff" stroke="#000" shapeRendering="crispEdges"><path d="M.5 .5h31v31H.5zM8.500 .5v31M16.500 .5v31M24.500 .5v31M.5 8.500h8M.5 16.500h31M.5 24.500h8M24.500 8.500h7M24.500 24.500h7" /></svg>
            <svg width="32" height="32"><path d="M.5 .5h31v31H.5z" fill="#fff" stroke="#000" /><rect x="3" y="3" width="18" height="16" fill="#c8c8a0" stroke="#555" /><rect x="4" y="4" width="12" height="9" fill="#001800" /><path d="M5 11l2-5l3 5l3-5l2 5" fill="none" stroke="#30e040" /><path d="M5 17q3 8 8 2t8-2" fill="none" stroke="#c03020" strokeWidth="1.500" /><path d="M5 19q5 6 11-1" fill="none" stroke="#203080" /><path d="M19 13l9 4.500l-9 4.500z" fill="#ffe838" stroke="#806000" /><path d="M28 17.500h3" stroke="#e08020" strokeWidth="1.500" /><text x="23" y="30" fontSize="10">1</text></svg>
          </div>
        </div>

        <div className="flex min-h-0 flex-1">
          <main className="min-w-0 flex-1 overflow-hidden bg-[#e1e1e1] bg-[linear-gradient(#c8c8c8_1px,transparent_1px),linear-gradient(90deg,#c8c8c8_1px,transparent_1px)] bg-[size:12px_12px] bg-[position:3px_10px] pl-[39px] pr-[47px] pt-[9px]">
            <div className="flex gap-3 border-l border-r-2 border-t-2 border-l-[#7fe04b] border-r-[#9be070] border-t-[#98e868] bg-[#bba494] pl-[18px] pr-[11px]">
              <LeftColumn />
              <RightColumn />
            </div>
          </main>
          <div className="flex w-[17px] flex-col items-center border-l border-white bg-[#f0f0f0] pt-1">
            <Chevron d="M1 7L4.500 3L8 7" />
            <div className="mt-[144px] h-[588px] w-full bg-[#a6a6a6]" />
            <div className="mt-auto"><Chevron d="M1 2L4.500 6L8 2" /></div>
          </div>
        </div>
        <div className="flex h-[17px] shrink-0 items-center border-t border-white bg-[#f0f0f0]">
          <span className="flex w-[311px] pl-1"><Chevron d="M6 1L2 4.500L6 8" /></span>
          <span className="h-full flex-1 bg-[#cdcdcd]" />
          <span className="flex w-[322px] justify-end pr-5"><Chevron d="M2 1L6 4.500L2 8" /></span>
        </div>
        <svg className="absolute -right-0.5 bottom-0" width="13" height="57"><rect x="4" y="1" width="5" height="46" rx="2.500" fill="#6c7c84" stroke="#44545c" /><path d="M6.500 26v22" stroke="#3ab4e4" strokeWidth="3" /><circle cx="6.500" cy="50" r="5.500" fill="#3ab4e4" stroke="#44545c" /></svg>
      </div>
      <Taskbar />
    </div>
  );
}
